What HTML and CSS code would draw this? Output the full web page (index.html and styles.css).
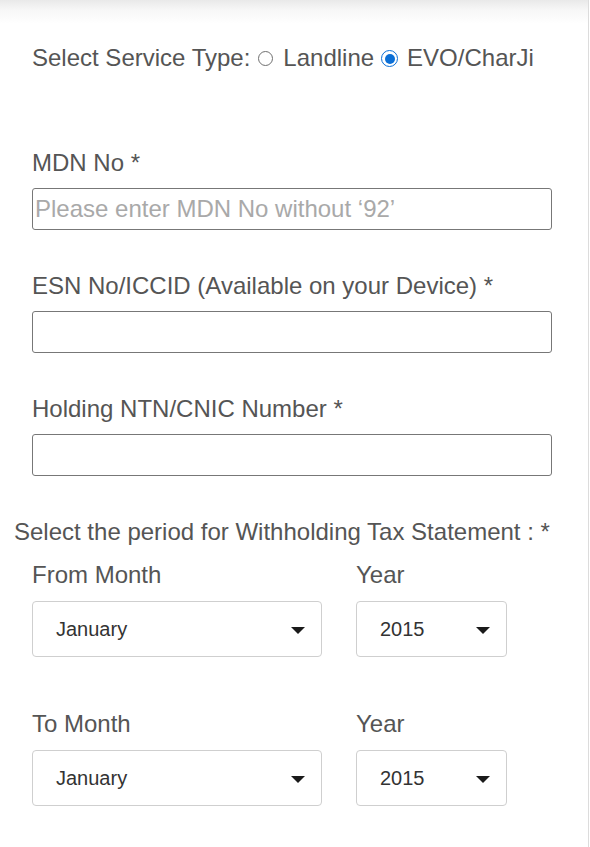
FILE: index.html
```html
<!DOCTYPE html>
<html lang="en">
<head>
<meta charset="utf-8">
<title>Withholding Tax Statement</title>
<link rel="stylesheet" href="styles.css">
</head>
<body>
<div class="page">
  <form class="form">
    <div class="service">
      <span class="service-label">Select Service Type:</span>
      <span class="radio"></span>
      <span class="opt">Landline</span>
      <span class="radio radio-on"><span class="dot"></span></span>
      <span class="opt">EVO/CharJi</span>
    </div>

    <label class="label label-first">MDN No *</label>
    <input class="input" type="text" placeholder="Please enter MDN No without ‘92’">

    <label class="label">ESN No/ICCID (Available on your Device) *</label>
    <input class="input" type="text">

    <label class="label">Holding NTN/CNIC Number *</label>
    <input class="input" type="text">

    <div class="period-title">Select the period for Withholding Tax Statement : *</div>

    <div class="period period-first">
      <div class="col">
        <div class="sel-label">From Month</div>
        <div class="select select-month">
          <span>January</span>
          <svg class="arrow" width="14" height="7" viewBox="0 0 14 7"><path d="M0 0H14L7 7Z" fill="#1a1a1a"/></svg>
        </div>
      </div>
      <div class="col">
        <div class="sel-label">Year</div>
        <div class="select select-year">
          <span>2015</span>
          <svg class="arrow" width="14" height="7" viewBox="0 0 14 7"><path d="M0 0H14L7 7Z" fill="#1a1a1a"/></svg>
        </div>
      </div>
    </div>

    <div class="period period-second">
      <div class="col">
        <div class="sel-label">To Month</div>
        <div class="select select-month">
          <span>January</span>
          <svg class="arrow" width="14" height="7" viewBox="0 0 14 7"><path d="M0 0H14L7 7Z" fill="#1a1a1a"/></svg>
        </div>
      </div>
      <div class="col">
        <div class="sel-label">Year</div>
        <div class="select select-year">
          <span>2015</span>
          <svg class="arrow" width="14" height="7" viewBox="0 0 14 7"><path d="M0 0H14L7 7Z" fill="#1a1a1a"/></svg>
        </div>
      </div>
    </div>
  </form>
</div>
</body>
</html>
```

FILE: styles.css
```css
* { box-sizing: border-box; }

html, body {
  margin: 0;
  padding: 0;
  background: #fff;
}

body {
  font-family: "Liberation Sans", Arial, Helvetica, sans-serif;
  color: #555;
}

.page {
  width: 589px;
  min-height: 847px;
  border-right: 1px solid #dcdcdc;
  background: linear-gradient(#e9e9e9 0px, #f7f7f7 10px, #ffffff 24px);
}

.form {
  padding: 44px 0 40px 32px;
  display: flex;
  flex-direction: column;
  align-items: flex-start;
}

.service {
  display: flex;
  align-items: center;
  font-size: 24px;
  line-height: 28px;
  height: 28px;
  color: #555;
}

.radio {
  width: 15px;
  height: 15px;
  border: 1.2px solid #6f6f6f;
  border-radius: 50%;
  margin: 1px 10px 0 8px;
  display: flex;
  align-items: center;
  justify-content: center;
  background: #fff;
}

.radio-on {
  width: 17px;
  height: 17px;
  border: 1.5px solid #0b6fd6;
  margin-left: 7px;
  margin-right: 9px;
}

.radio-on .dot {
  width: 10px;
  height: 10px;
  border-radius: 50%;
  background: #0b6fd6;
}

.label {
  display: block;
  font-size: 24px;
  line-height: 28px;
  margin-top: 42px;
  color: #555;
}

.label-first {
  margin-top: 77px;
}

.input {
  display: block;
  width: 520px;
  height: 42px;
  margin-top: 11px;
  border: 1px solid #777;
  border-radius: 3px;
  padding: 0 2px;
  font-family: "Liberation Sans", Arial, Helvetica, sans-serif;
  font-size: 24px;
  color: #333;
  background: #fff;
  outline: none;
}

.input::placeholder {
  color: #a9a9a9;
}

.period-title {
  margin-top: 42px;
  margin-left: -18px;
  font-size: 24px;
  line-height: 28px;
  color: #555;
}

.period {
  display: grid;
  grid-template-columns: 290px 151px;
  column-gap: 34px;
}

.period-first { margin-top: 15px; }
.period-second { margin-top: 53px; }

.sel-label {
  font-size: 24px;
  line-height: 28px;
  color: #555;
}

.select {
  margin-top: 12px;
  height: 56px;
  border: 1px solid #cfcfcf;
  border-radius: 4px;
  display: flex;
  align-items: center;
  justify-content: space-between;
  padding: 0 16px 0 23px;
  font-size: 20px;
  color: #333;
  background: #fff;
}

.arrow {
  display: block;
  margin-top: 3px;
}
```
